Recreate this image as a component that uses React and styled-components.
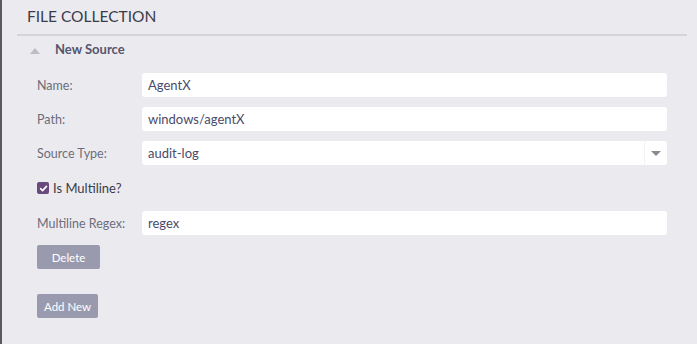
import React from 'react';
import styled, { createGlobalStyle } from 'styled-components';

const GlobalStyle = createGlobalStyle`
  html, body {
    margin: 0;
    padding: 0;
    background: #ebebef;
  }
  body {
    font-family: Lato, "Open Sans", sans-serif;
  }
`;

const Page = styled.div`
  height: 344px;
  box-sizing: border-box;
  border-left: 2px solid #5a5a5e;
  background: #ebebef;
  padding: 0 10px 0 15px;
  overflow: hidden;
`;

const Title = styled.h1`
  margin: 0;
  padding: 7px 0 0 10px;
  height: 27px;
  font-size: 15.5px;
  font-weight: 400;
  color: #3b3b4a;
  border-bottom: 2px solid #d4d4d9;
`;

const SectionHead = styled.div`
  display: flex;
  align-items: center;
  height: 26px;
  padding-left: 13px;
  gap: 15px;
`;

const Caret = styled.span`
  width: 0;
  height: 0;
  border-left: 5px solid transparent;
  border-right: 5px solid transparent;
  border-bottom: 6px solid #bdbdc3;
  margin-top: 4px;
`;

const SectionTitle = styled.span`
  font-size: 13px;
  font-weight: 700;
  color: #55556e;
`;

const Form = styled.div`
  padding: 11px 20px 0 20px;
  display: flex;
  flex-direction: column;
`;

const Row = styled.div`
  display: grid;
  grid-template-columns: 105px 1fr;
  align-items: center;
  height: 24px;
  margin-bottom: ${(p) => p.gap ?? 10}px;
`;

const Label = styled.label`
  font-size: 12.5px;
  color: #6d6d7b;
`;

const Field = styled.div`
  position: relative;
  height: 24px;
  background: #fff;
  border-radius: 3px;
  display: flex;
  align-items: center;
  padding-left: 6px;
  font-size: 13px;
  color: #4a4a6c;
`;

const SelectArrow = styled.span`
  position: absolute;
  right: 0;
  top: 0;
  bottom: 0;
  width: 22px;
  border-left: 1px solid #f3f3f5;
  display: flex;
  align-items: center;
  justify-content: center;
  &::after {
    content: '';
    border-left: 5px solid transparent;
    border-right: 5px solid transparent;
    border-top: 5px solid #8a8a90;
  }
`;

const CheckRow = styled.label`
  display: flex;
  align-items: center;
  gap: 4px;
  height: 24px;
  margin-bottom: 11px;
  font-size: 13px;
  color: #3b3b4a;
`;

const Box = styled.span`
  width: 12px;
  height: 12px;
  border-radius: 2px;
  background: #6a4a7c;
  display: flex;
  align-items: center;
  justify-content: center;
`;

const Button = styled.button`
  align-self: flex-start;
  height: 24px;
  padding: 0 7px;
  border: none;
  border-radius: 2px;
  background: #9a9aae;
  color: #fff;
  font-family: Lato, "Open Sans", sans-serif;
  font-size: 11.5px;
  margin-bottom: ${(p) => p.gap ?? 0}px;
`;

export default function App() {
  return (
    <>
      <GlobalStyle />
      <Page>
        <Title>FILE COLLECTION</Title>
        <SectionHead>
          <Caret />
          <SectionTitle>New Source</SectionTitle>
        </SectionHead>
        <Form>
          <Row>
            <Label>Name:</Label>
            <Field>AgentX</Field>
          </Row>
          <Row>
            <Label>Path:</Label>
            <Field>windows/agentX</Field>
          </Row>
          <Row gap={11}>
            <Label>Source Type:</Label>
            <Field>
              audit-log
              <SelectArrow />
            </Field>
          </Row>
          <CheckRow>
            <Box>
              <svg width="9" height="9" viewBox="0 0 10 10">
                <path d="M1.8 5.2 L4 7.4 L8.3 2.6" fill="none" stroke="#fff" strokeWidth="1.8" strokeLinecap="round" strokeLinejoin="round" />
              </svg>
            </Box>
            Is Multiline?
          </CheckRow>
          <Row>
            <Label>Multiline Regex:</Label>
            <Field>regex</Field>
          </Row>
          <Button style={{ width: 63 }} gap={25}>Delete</Button>
          <Button>Add New</Button>
        </Form>
      </Page>
    </>
  );
}
